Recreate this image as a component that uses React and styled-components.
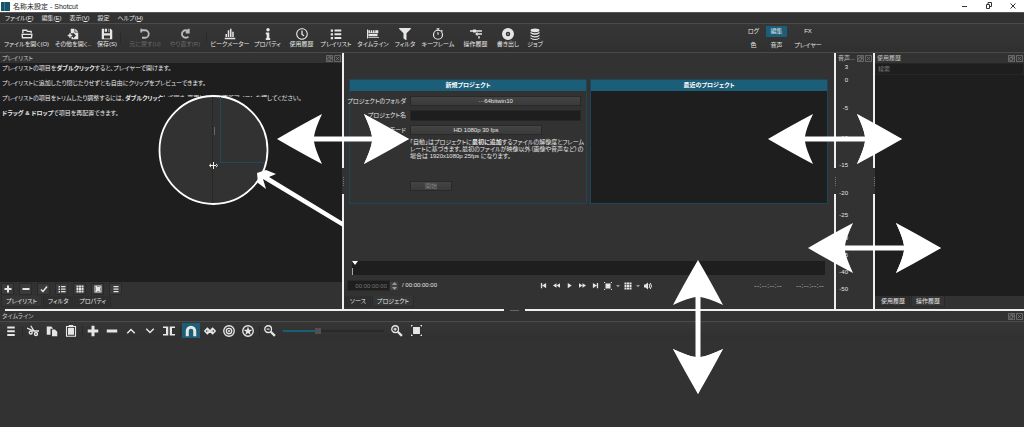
import React from "react"
import styled, { createGlobalStyle } from "styled-components"
import { FaInfo, FaRegClock, FaFilter } from "react-icons/fa"

const toolbar = [
  { icon: "open", text: "ファイルを開く(O)", size: 45 },
  { icon: "other", text: "その他を開く..", size: 48 },
  { icon: "save", text: "保存(S)", size: 20 },
  { divider: true, size: 7 },
  { icon: "undo", text: "元に戻す(U)", size: 42, off: true },
  { icon: "redo", text: "やり直す(R)", size: 38, off: true },
  { divider: true, size: 5 },
  { icon: "peak", text: "ピークメーター", size: 42 },
  { icon: "info", text: "プロパティ", size: 33 },
  { icon: "clock", text: "使用履歴", size: 35 },
  { icon: "list", text: "プレイリスト", size: 34 },
  { icon: "tracks", text: "タイムライン", size: 40 },
  { icon: "filter", text: "フィルタ", size: 24 },
  { icon: "stopwatch", text: "キーフレーム", size: 42 },
  { icon: "steps", text: "操作履歴", size: 33 },
  { icon: "disc", text: "書き出し", size: 32 },
  { icon: "jobs", text: "ジョブ", size: 22 },
]

const menus = [
  ["ファイル", "F"],
  ["編集", "E"],
  ["表示", "V"],
  ["設定", ""],
  ["ヘルプ", "H"],
]

const modes = ["ログ", "編集", "FX", "色", "音声", "プレイヤー"]

const playlistTools = ["plus", "minus", "check", "list", "grid", "detail", "menu"]

const timelineTools = [
  "menu", "|", "cut", "copy", "paste", "|", "plus", "minus", "up", "down",
  "split", "|", "magnet", "scrub", "ripple", "rippleAll", "|", "zoomOut",
]

// db label and the distance to the next one
const levels = [
  ["3", 13], ["0", 28], ["-5", 29], ["-10", 27], ["-15", 28], ["-20", 22],
  ["-25", 22], ["-30", 17], ["-35", 17], ["-40", 17], ["-50", 24],
]

const shapes = {
  open: <path d="M2.500 7V3h5l1 1.500h5V7M1.500 8.500h13l-.5 4.500H2z" fill="none" stroke="currentColor" strokeWidth="1.800" />,
  other: <path d="M5 1h5v5h5v9H6v-3h2v2l4-4-4-4v1H5zM11 1l4 4h-4zM1 9h2V7h2v2h2v2H5v2H3v-2H1z" />,
  save: <path fillRule="evenodd" d="M1 1h3v6h8V1h1l2 2v12H1zM4 10v4h8v-4zM5 1h3v4H5zM10 1h1v4h-1z" />,
  undo: <path d="M3 3h5a5 5 0 0 1 0 10H4M3 1v5" fill="none" stroke="currentColor" strokeWidth="2.400" />,
  redo: <path d="M12.500 4.500A5 5 0 1 0 12.500 11.500M13 1v5H9" fill="none" stroke="currentColor" strokeWidth="2.400" />,
  peak: <path d="M1 13h14v2H1zM2 8h2v4H2zM5 3h2v9H5zM8 1h2v11H8zM11 5h2v7h-2z" />,
  list: <path d="M1 2h3v3H1zM6 2h9v2.500H6zM1 7h3v3H1zM6 7h9v2.500H6zM1 12h3v3H1zM6 12h9v2.500H6z" />,
  tracks: <path d="M0 2h1.500v12H0zM2 3h2v3h1V3h2v3h1V3h2v3h1V3h4v4H2zM2 8h12v3H2zM2 12h14v1H2z" />,
  stopwatch: (
    <g fill="none" stroke="currentColor" strokeWidth="1.600">
      <circle cx="8" cy="9" r="6" />
      <path d="M6 1h4M8 1v3M8 5.500V9M12.500 3l1.500 1.500" />
    </g>
  ),
  steps: <path d="M0 3h4V2h4v1h8v2H8v1H4V5H0zM10 7h6v2h-6v2L7 8l3-3zM11 11h2v3h-2z" />,
  disc: (
    <path
      fillRule="evenodd"
      d="M8 0a8 8 0 1 0 0 16A8 8 0 1 0 8 0M8 5a3 3 0 1 1 0 6a3 3 0 1 1 0-6M8 7a1 1 0 1 0 0 2a1 1 0 1 0 0-2"
    />
  ),
  jobs: (
    <g>
      <ellipse cx="8" cy="3" rx="6" ry="2.500" />
      <path d="M2 5q6 4 12 0v2q-6 4-12 0zM2 9q6 4 12 0v1.500q-6 4-12 0zM2 12.500q6 4 12 0V14q-6 4-12 0z" />
    </g>
  ),
  plus: <path d="M6 1h4v5h5v4h-5v5H6v-5H1V6h5z" />,
  minus: <path d="M1 6h14v4H1z" />,
  check: <path d="M2 9l4 4 8-10" fill="none" stroke="currentColor" strokeWidth="3" />,
  grid: <path d="M1 1h4v4H1zM6 1h4v4H6zM11 1h4v4h-4zM1 6h4v4H1zM6 6h4v4H6zM11 6h4v4h-4zM1 11h4v4H1zM6 11h4v4H6zM11 11h4v4h-4z" />,
  detail: <path fillRule="evenodd" d="M1 1h14v14H1zM3 3h1v10H3zM6 3h7v1H6zM12 5h1v8h-1zM6 12h5v1H6z" />,
  menu: <path d="M3 2h10v2.500H3zM3 7h10v2.500H3zM3 12h10v2.500H3z" />,
  cut: (
    <g fill="none" stroke="currentColor" strokeWidth="1.800">
      <path d="M0 4l10 4.500M5 1l5 8M9 8h7" />
      <circle cx="12" cy="12" r="2" />
      <circle cx="5" cy="10" r="2" />
    </g>
  ),
  copy: <path d="M1 2h6l2 2v1H6v8H1zM8 6h4l3 3v6H8z" />,
  paste: (
    <g>
      <path d="M2 2h12v13H2z" fill="none" stroke="currentColor" strokeWidth="1.500" />
      <path d="M5 0h6v3H5zM4 4h8v9H4z" />
    </g>
  ),
  up: <path d="M3 11l5-5 5 5" fill="none" stroke="currentColor" strokeWidth="2" />,
  down: <path d="M3 5l5 5 5-5" fill="none" stroke="currentColor" strokeWidth="2" />,
  split: <path d="M0 2h7v12H0v-2h4V4H0zM16 2H9v12h7v-2h-4V4h4z" />,
  magnet: <path d="M1 15V8a7 7 0 0 1 14 0v7h-4V8a3 3 0 0 0-6 0v7z" />,
  scrub: (
    <g fill="none" stroke="currentColor" strokeWidth="2">
      <path d="M4.500 4.500L1 8l3.500 3.500L8 8zM11.500 4.500L8 8l3.500 3.500L15 8z" />
      <path d="M4 8h8" />
    </g>
  ),
  ripple: (
    <g fill="none" stroke="currentColor" strokeWidth="1.800">
      <circle cx="8" cy="8" r="7" />
      <circle cx="8" cy="8" r="3.600" />
      <circle cx="8" cy="8" r="0.600" />
    </g>
  ),
  rippleAll: (
    <g>
      <circle cx="8" cy="8" r="7" fill="none" stroke="currentColor" strokeWidth="1.800" />
      <path d="M8 2l1.500 4.200 4.500.1-3.500 2.700 1.200 4.300L8 10.800l-3.700 2.500L5.500 9 2 6.300l4.500-.1z" />
    </g>
  ),
  zoomOut: (
    <g fill="none" stroke="currentColor">
      <circle cx="5.500" cy="5.500" r="4.500" strokeWidth="1.700" />
      <path d="M3.500 5.500h4" strokeWidth="1.500" />
      <path d="M9 9l5.500 5.500" strokeWidth="3" />
    </g>
  ),
  zoomIn: (
    <g fill="none" stroke="currentColor">
      <circle cx="5.500" cy="5.500" r="4.500" strokeWidth="1.700" />
      <path d="M3.500 5.500h4M5.500 3.500v4" strokeWidth="1.500" />
      <path d="M9 9l5.500 5.500" strokeWidth="3" />
    </g>
  ),
  fit: <path d="M3 3h10v10H3zM0 0h3L0 3zM16 0h-3l3 3zM0 16h3l-3-3zM16 16h-3l3-3z" />,
  first: <path d="M2 2h3v12H2zM14 2v12L5 8z" />,
  rewind: <path d="M8 3v10L0 8zM16 3v10L8 8z" />,
  play: <path d="M4 2l9 6-9 6z" />,
  forward: <path d="M0 3l8 5-8 5zM8 3l8 5-8 5z" />,
  last: <path d="M11 2h3v12h-3zM2 2l9 6-9 6z" />,
  volume: (
    <g>
      <path d="M0 5h3l5-4v14l-5-4H0z" />
      <path d="M10 4q3 4 0 8M12.500 2q5 6 0 12" fill="none" stroke="currentColor" strokeWidth="2" />
    </g>
  ),
  caret: <path d="M0 4h16l-8 9z" />,
  float: <path d="M1 1h14v14H1zM4 6h6v6H4zM6 4h6v6" fill="none" stroke="currentColor" strokeWidth="1.500" />,
  close: <path d="M1 1h14v14H1zM4 4l8 8M12 4l-8 8" fill="none" stroke="currentColor" strokeWidth="1.500" />,
}

const packaged = {
  info: FaInfo,
  clock: FaRegClock,
  filter: FaFilter,
}

const Icon = ({ name, size = 10 }) => {
  const Packaged = packaged[name]
  if (Packaged) return <Packaged size={size} />
  return (
    <svg width={size} height={size} viewBox="0 0 16 16" fill="currentColor" aria-hidden="true">
      {shapes[name]}
    </svg>
  )
}

const DockTitle = ({ children }) => (
  <DockBar>
    <h2>{children}</h2>
    <button aria-label="フロート">
      <Icon name="float" size={7} />
    </button>
    <button aria-label="閉じる">
      <Icon name="close" size={7} />
    </button>
  </DockBar>
)

const Tabs = ({ items, active }) => (
  <TabRow>
    {items.map((text, i) => (
      <Tab key={text} $active={i === active}>
        {text}
      </Tab>
    ))}
  </TabRow>
)

const Splitter = () => (
  <Handle>
    <i />
    <b />
    <i />
  </Handle>
)

const Playlist = () => (
  <Dock $grow={342}>
    <DockTitle>プレイリスト</DockTitle>
    <Help>
      <p>
        プレイリストの項目を<strong>ダブルクリック</strong>すると、プレイヤーで開けます。
      </p>
      <p>プレイリストに追加したり閉じたりせずとも自由にクリップをプレビューできます。</p>
      <p>
        プレイリストの項目をトリムしたり調整するには、<strong>ダブルクリック</strong>
        して開き、変更した後に更新アイコンを押してください。
      </p>
      <p>
        <strong>ドラッグ &amp; ドロップ</strong>で項目を再配置できます。
      </p>
    </Help>
    <SmallTools>
      {playlistTools.map(name => (
        <button key={name} aria-label={name}>
          <Icon name={name} size={8} />
        </button>
      ))}
    </SmallTools>
    <Tabs items={["プレイリスト", "フィルタ", "プロパティ"]} active={0} />
  </Dock>
)

const Player = () => (
  <Dock $grow={490}>
    <Projects>
      <Card>
        <h3>新規プロジェクト</h3>
        <Form>
          <label htmlFor="folder">プロジェクトのフォルダ</label>
          <FormButton id="folder">···64bitwin10</FormButton>
          <label htmlFor="name">プロジェクト名</label>
          <input id="name" />
          <label htmlFor="mode">映像モード</label>
          <FormButton id="mode" $width="132px">
            HD 1080p 30 fps
          </FormButton>
          <p>
            「自動」はプロジェクトに<strong>最初に追加</strong>するファイルの解像度とフレーム
            <br />
            レートに基づきます。最初のファイルが映像以外（画像や音声など）の
            <br />
            場合は 1920x1080p 25fps になります。
          </p>
          <FormButton $width="42px" disabled>
            開始
          </FormButton>
        </Form>
      </Card>
      <Card $dark>
        <h3>最近のプロジェクト</h3>
      </Card>
    </Projects>
    <Scrub>
      <svg width="8" height="14" viewBox="0 0 8 14">
        <path d="M0 0h6L3 4z" fill="#fff" />
        <path d="M.5 7v7" stroke="#aaa" />
      </svg>
    </Scrub>
    <Transport>
      <Timecode>
        <input aria-label="現在位置" defaultValue="00:00:00:00" />
        <button aria-label="増減">
          <svg width="5" height="8" viewBox="0 0 5 8" fill="#999">
            <path d="M0 3h5L2.500 0zM0 5h5L2.500 8z" />
          </svg>
        </button>
        <span>/ 00:00:00:00</span>
      </Timecode>
      <Buttons>
        {["first", "rewind", "play", "forward", "last"].map(name => (
          <button key={name} aria-label={name}>
            <Icon name={name} size={7} />
          </button>
        ))}
        <button aria-label="ズーム">
          <Icon name="fit" size={8} />
        </button>
        <CaretButton aria-label="ズームメニュー">
          <Icon name="caret" size={4} />
        </CaretButton>
        <button aria-label="グリッド">
          <Icon name="grid" size={8} />
        </button>
        <CaretButton aria-label="グリッドメニュー">
          <Icon name="caret" size={4} />
        </CaretButton>
        <button aria-label="音量">
          <Icon name="volume" size={8} />
        </button>
      </Buttons>
      <Marks>
        <span>--:--:--:--</span>
        <span>--:--:--:--</span>
      </Marks>
    </Transport>
    <Tabs items={["ソース", "プロジェクト"]} active={1} />
  </Dock>
)

const Annotations = () => {
  const head = "M0 0Q24-11 45-25Q38-10 37-2.500V2.500Q38 10 45 25Q24 11 0 0z"
  const arrows = [
    [277, 139, 132, 0],
    [768, 139, 134, 0],
    [808, 248, 133, 0],
    [698, 260, 134, 90],
  ]
  return (
    <Overlay viewBox="0 0 1024 427" preserveAspectRatio="none" aria-hidden="true">
      <path d="M160 97h107v40H160z" fill="#1e1e1e" />
      <circle cx="213.500" cy="150" r="54" fill="#323232" stroke="#fff" strokeWidth="1.800" />
      <path d="M212.500 97v106" stroke="#292929" />
      <path d="M220.500 97v65.500H265" fill="none" stroke="#1d4a5c" />
      <path d="M214.500 127v8" stroke="#666" />
      <path d="M209 165.500l2-2v4zM218 165.500l-2-2v4zM210 165h7v1h-7zM213 162h1v7h-1z" fill="#eee" />
      <g fill="#fff">
        {arrows.map(([x, y, length, angle]) => (
          <g key={`${x}-${y}`} transform={`translate(${x} ${y}) rotate(${angle})`}>
            <path d="M0 0Q24-14 45-25Q38-10 37-2.500V2.500Q38 10 45 25Q24 14 0 0z" />
            <path d={head} transform={`translate(${length} 0) rotate(180)`} />
            <path
              d="M0 0Q24-14 45-25Q38-10 37-2.500V2.500Q38 10 45 25Q24 14 0 0z"
              transform={`translate(${length} 0) rotate(180)`}
            />
            <path d={`M35-2.500H${length - 35}v5H35z`} />
          </g>
        ))}
        <path d="M257 173l9-3 10 4-7 3 74 45v5l-80-48 3 10-8-6z" />
      </g>
    </Overlay>
  )
}

const App = () => {
  const [zoom, setZoom] = React.useState(34)
  return (
    <Page>
      <GlobalStyle />
      <TitleBar>
        <Logo />
        <h1>名称未設定 - Shotcut</h1>
        <svg width="62" height="10" viewBox="0 0 62 10" fill="none" stroke="#333">
          <path d="M6 5.500h5" />
          <path d="M30.500 3.500h3v4h-3zM32 3V1.500h3.500v4H34" />
          <path d="M54.500 2.500l5 5M59.500 2.500l-5 5" />
        </svg>
      </TitleBar>
      <MenuBar>
        {menus.map(([text, key]) => (
          <button key={text}>
            {text}
            {key && (
              <>
                (<u>{key}</u>)
              </>
            )}
          </button>
        ))}
      </MenuBar>
      <Toolbar>
        {toolbar.map((item, i) =>
          item.divider ? (
            <Divider key={i} $size={item.size} />
          ) : (
            <Tool key={item.icon} $size={item.size} disabled={item.off}>
              <Icon name={item.icon} size={12} />
              <span>{item.text}</span>
            </Tool>
          )
        )}
        <Modes>
          {modes.map((mode, i) => (
            <Mode key={mode} $active={i === 1}>
              {mode}
            </Mode>
          ))}
        </Modes>
      </Toolbar>
      <Main>
        <Playlist />
        <Splitter />
        <Player />
        <Splitter />
        <AudioDock>
          <DockTitle>音声...</DockTitle>
          <Levels>
            {levels.map(([text, gap]) => (
              <Level key={text} $gap={gap}>
                {text}
              </Level>
            ))}
          </Levels>
        </AudioDock>
        <Splitter />
        <Dock $grow={149}>
          <DockTitle>使用履歴</DockTitle>
          <Search placeholder="検索" aria-label="検索" />
          <DarkList />
          <Tabs items={["使用履歴", "操作履歴"]} active={1} />
        </Dock>
      </Main>
      <RowHandle>
        <i />
        <b />
        <i />
      </RowHandle>
      <Timeline>
        <DockTitle>タイムライン</DockTitle>
        <TimelineBar>
          {timelineTools.map((name, i) =>
            name === "|" ? (
              <Divider key={i} $size={2} />
            ) : (
              <TimelineButton key={name} aria-label={name} $active={name === "magnet"}>
                <Icon name={name} size={12} />
              </TimelineButton>
            )
          )}
          <Slider
            type="range"
            aria-label="ズーム"
            value={zoom}
            onChange={e => setZoom(Number(e.target.value))}
            style={{ "--fill": `${zoom}%` }}
          />
          <TimelineButton aria-label="zoomIn">
            <Icon name="zoomIn" size={12} />
          </TimelineButton>
          <TimelineButton aria-label="fit">
            <Icon name="fit" size={11} />
          </TimelineButton>
        </TimelineBar>
      </Timeline>
      <Annotations />
    </Page>
  )
}

const GlobalStyle = createGlobalStyle`
  * {
    box-sizing: border-box;
  }
  body {
    margin: 0;
    background: #323232;
  }
  body, button, input {
    font-family: "Liberation Sans", "Noto Sans CJK JP", sans-serif;
    font-feature-settings: "palt";
    font-size: 6px;
    line-height: 9px;
    color: #e6e6e6;
  }
  button {
    padding: 0;
    border: none;
    background: none;
    white-space: nowrap;
  }
  h1, h2, h3, p {
    margin: 0;
    font-size: 6px;
    font-weight: 400;
  }
  svg {
    flex: none;
  }
`
const Page = styled.div`
  position: relative;
  display: flex;
  flex-direction: column;
  min-height: 100vh;
  overflow: hidden;
`
const TitleBar = styled.header`
  display: flex;
  align-items: center;
  height: 12px;
  padding: 0 6px 0 1px;
  gap: 3px;
  background: #fff;
  h1 {
    flex: 1;
    font-size: 7px;
    color: #222;
  }
`
const Logo = styled.i`
  width: 9px;
  height: 9px;
  background: linear-gradient(90deg, #17546a 30%, #3a7b91 30% 40%, #17546a 40%);
`
const MenuBar = styled.nav`
  display: flex;
  gap: 8px;
  height: 12px;
  padding: 0 5px;
  border-top: 1px solid #555;
  border-bottom: 1px solid #4b4b4b;
`
const Toolbar = styled.div`
  display: flex;
  height: 29px;
  padding-left: 4px;
  border-bottom: 1px solid #4b4b4b;
  background: linear-gradient(#363636, #303030);
`
const Tool = styled.button`
  display: flex;
  flex-direction: column;
  align-items: center;
  justify-content: center;
  flex: none;
  width: ${p => p.$size}px;
  &:disabled {
    color: #6a6a6a;
    svg {
      color: #bbb;
    }
  }
`
const Divider = styled.i`
  flex: none;
  align-self: center;
  width: ${p => p.$size}px;
  height: 10px;
  background: linear-gradient(#292929, #292929) center / 1px 100% no-repeat;
`
const Modes = styled.div`
  display: grid;
  grid-template-columns: 23px 23px 40px;
  gap: 3px 0;
  align-content: center;
  justify-items: center;
  margin: 0 auto;
`
const Mode = styled.button`
  height: 11px;
  min-width: 21px;
  background: ${p => (p.$active ? "#1c5d78" : "none")};
`
const Main = styled.main`
  display: flex;
  flex: 257 1 0;
`
const Dock = styled.section`
  display: flex;
  flex-direction: column;
  flex: ${p => p.$grow} 1 0;
  min-width: 0;
`
const AudioDock = styled.section`
  display: flex;
  flex-direction: column;
  width: 37px;
`
const DockBar = styled.div`
  display: flex;
  align-items: center;
  gap: 1px;
  height: 10px;
  padding: 0 1px 0 2px;
  flex: none;
  color: #c8c8c8;
  h2 {
    flex: 1;
    white-space: nowrap;
  }
  button {
    display: flex;
    color: #888;
  }
`
const Help = styled.div`
  flex: 1;
  padding: 1px 2px;
  background: #1e1e1e;
  p {
    margin-bottom: 6px;
    white-space: nowrap;
  }
`
const SmallTools = styled.div`
  display: flex;
  gap: 5px;
  padding: 1px 1px;
  button {
    display: flex;
    align-items: center;
    justify-content: center;
    width: 13px;
    height: 12px;
    border: 1px solid #292929;
    background: #3b3b3b;
  }
`
const TabRow = styled.div`
  display: flex;
  gap: 1px;
  height: 13px;
  padding: 0 1px 2px;
`
const Tab = styled.button`
  padding: 0 4px;
  border: 1px solid #2a2a2a;
  border-top: none;
  background: ${p => (p.$active ? "#353535" : "#2e2e2e")};
`
const Handle = styled.div`
  display: flex;
  flex-direction: column;
  align-items: center;
  justify-content: space-between;
  width: 2px;
  i {
    width: 2px;
    height: 45%;
    background: #eee;
  }
  b {
    width: 1px;
    height: 9px;
    background: repeating-linear-gradient(#777 0 1px, #333 1px 2px);
  }
`
const RowHandle = styled.div`
  display: flex;
  align-items: center;
  justify-content: space-between;
  height: 2px;
  padding-left: 5px;
  i {
    width: 49%;
    height: 2px;
    background: #eee;
  }
  b {
    width: 9px;
    height: 1px;
    background: #666;
  }
`
const Projects = styled.div`
  display: grid;
  grid-template-columns: minmax(0, 1fr) minmax(0, 1fr);
  gap: 3px;
  margin: 26px 6px 0 5px;
`
const Card = styled.div`
  min-height: 125px;
  border: 1px solid #1d4658;
  background: ${p => (p.$dark ? "#1e1e1e" : "#323232")};
  h3 {
    height: 11px;
    line-height: 11px;
    background: #1c5d78;
    color: #fff;
    font-weight: 700;
    text-align: center;
  }
`
const Form = styled.div`
  display: grid;
  grid-template-columns: 56px minmax(0, 1fr);
  gap: 4px;
  padding: 5px 5px 0 0;
  align-items: center;
  label {
    justify-self: end;
    white-space: nowrap;
  }
  input {
    width: 100%;
    height: 11px;
    border: 1px solid #272727;
    background: #1e1e1e;
  }
  p {
    grid-column: 2;
    height: 38px;
    line-height: 7px;
    white-space: nowrap;
  }
`
const FormButton = styled.button`
  grid-column: 2;
  width: ${p => p.$width || "100%"};
  height: 10px;
  border: 1px solid #292929;
  background: linear-gradient(#444, #3a3a3a);
  line-height: 8px;
  &:disabled {
    color: #858585;
  }
`
const Scrub = styled.div`
  height: 14px;
  margin: auto 9px 5px 8px;
  background: #1e1e1e;
  svg {
    display: block;
  }
`
const Transport = styled.div`
  display: flex;
  justify-content: space-between;
  align-items: center;
  height: 11px;
  margin: 0 10px 5px 3px;
`
const Timecode = styled.div`
  display: flex;
  align-items: center;
  white-space: nowrap;
  input {
    width: 43px;
    height: 11px;
    padding: 0 2px;
    border: 1px solid #292929;
    background: #1e1e1e;
    color: #777;
    text-align: right;
  }
  button {
    display: flex;
    justify-content: center;
    width: 8px;
    margin-right: 4px;
    background: #424242;
  }
`
const Buttons = styled.div`
  display: flex;
  align-items: center;
  button {
    display: flex;
    justify-content: center;
    width: 13px;
  }
`
const CaretButton = styled.button`
  && {
    width: 7px;
    color: #999;
  }
`
const Marks = styled.div`
  display: flex;
  gap: 14px;
  font-size: 8px;
  color: #aaa;
`
const Levels = styled.div`
  display: flex;
  flex-direction: column;
  flex: 1;
  width: 12px;
`
const Level = styled.span`
  flex: ${p => p.$gap} 1 0;
  text-align: right;
`
const Search = styled.input`
  width: 100%;
  height: 12px;
  padding: 0 2px;
  border: 1px solid #262626;
  background: #1e1e1e;
  &::placeholder {
    color: #777;
  }
`
const DarkList = styled.div`
  flex: 1;
  background: #1e1e1e;
`
const Timeline = styled.section`
  flex: 116 1 0;
`
const TimelineBar = styled.div`
  display: flex;
  align-items: center;
  gap: 1px;
  height: 18px;
  padding: 0 2px;
  border-top: 1px solid #4b4b4b;
  background: linear-gradient(#363636, #303030);
`
const TimelineButton = styled.button`
  display: flex;
  align-items: center;
  justify-content: center;
  flex: none;
  width: 18px;
  height: 15px;
  background: ${p => (p.$active ? "#1c5d78" : "none")};
`
const Slider = styled.input`
  width: 101px;
  height: 8px;
  margin: 0 3px;
  appearance: none;
  background: linear-gradient(90deg, #1c5d78 var(--fill), #292929 var(--fill)) center / 100% 2px
    no-repeat;
  &::-webkit-slider-thumb {
    appearance: none;
    width: 6px;
    height: 6px;
    background: #505050;
  }
`
const Overlay = styled.svg`
  position: absolute;
  inset: 0;
  width: 100%;
  height: 100%;
  pointer-events: none;
`
export default App
